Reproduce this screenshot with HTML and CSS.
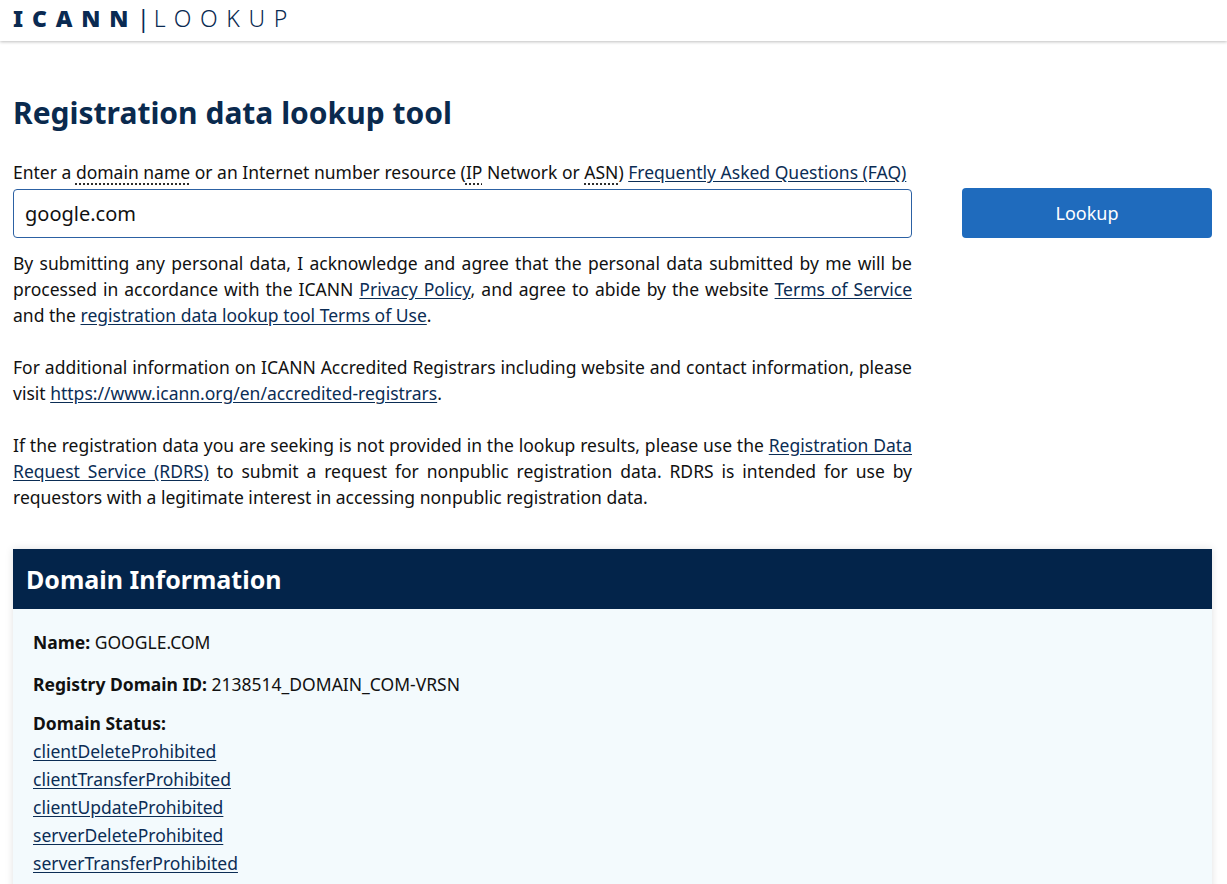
FILE: index.html
```html
<!DOCTYPE html>
<html lang="en">

<head>
    <meta charset="UTF-8">
    <meta name="viewport" content="width=device-width, initial-scale=1.0">
    <title>ICANN Lookup</title>
    <link rel="stylesheet" href="styles.css">
</head>

<body>
    <header class="site-header">
        <a class="logo" href="#"><span class="logo-icann">ICANN</span><span class="logo-bar">|</span><span class="logo-lookup">LOOKUP</span></a>
    </header>

    <main class="page">
        <h1>Registration data lookup tool</h1>

        <form class="lookup-form">
            <label class="lookup-label" for="query">Enter a <abbr title="Example: icann.org">domain name</abbr> or an Internet number resource (<abbr title="Internet Protocol">IP</abbr> Network or <abbr title="Autonomous System Number">ASN</abbr>) <a href="#">Frequently Asked Questions (FAQ)</a></label>
            <input class="lookup-input" type="text" id="query" name="query" value="google.com">
            <button class="lookup-button" type="button">Lookup</button>

            <div class="notes">
                <p>By submitting any personal data, I acknowledge and agree that the personal data submitted by me will be processed in accordance with the ICANN <a href="#">Privacy Policy</a>, and agree to abide by the website <a href="#">Terms of Service</a> and the <a href="#">registration data lookup tool Terms of Use</a>.</p>
                <p>For additional information on ICANN Accredited Registrars including website and contact information, please visit <a href="#">https://www.icann.org/en/accredited-registrars</a>.</p>
                <p>If the registration data you are seeking is not provided in the lookup results, please use the <a href="#">Registration Data Request Service (RDRS)</a> to submit a request for nonpublic registration data. RDRS is intended for use by requestors with a legitimate interest in accessing nonpublic registration data.</p>
            </div>
        </form>

        <section class="result-card">
            <h2 class="result-title">Domain Information</h2>
            <div class="result-body">
                <p><strong>Name:</strong> GOOGLE.COM</p>
                <p><strong>Registry Domain ID:</strong> 2138514_DOMAIN_COM-VRSN</p>
                <div class="status">
                    <strong>Domain Status:</strong>
                    <ul class="status-list">
                        <li><a href="#">clientDeleteProhibited</a></li>
                        <li><a href="#">clientTransferProhibited</a></li>
                        <li><a href="#">clientUpdateProhibited</a></li>
                        <li><a href="#">serverDeleteProhibited</a></li>
                        <li><a href="#">serverTransferProhibited</a></li>
                        <li><a href="#">serverUpdateProhibited</a></li>
                    </ul>
                </div>
            </div>
        </section>
    </main>
</body>

</html>
```

FILE: styles.css
```css
body {
    margin: 0;
    font-family: "Noto Sans", "Open Sans", sans-serif;
    font-size: 17.5px;
    line-height: 26px;
    color: #111111;
    background-color: #ffffff;
}

a {
    color: #0b2d55;
    text-decoration: underline;
    text-underline-offset: 2px;
}

abbr {
    text-decoration: underline dotted;
    text-underline-offset: 5px;
}

.site-header {
    height: 41px;
    padding: 0 13px;
    display: flex;
    align-items: center;
    box-shadow: 0 1px 3px rgba(0, 0, 0, 0.25);
}

.logo {
    display: flex;
    align-items: center;
    color: #0a2a52;
    text-decoration: none;
    font-size: 23px;
    line-height: 28px;
    margin-top: -5px;
}

.logo-icann {
    font-weight: 900;
    letter-spacing: 8.8px;
}

.logo-bar {
    font-weight: 400;
    margin: 0 4px 0 0;
}

.logo-lookup {
    font-weight: 300;
    letter-spacing: 8.6px;
}

.page {
    padding: 0 15px 0 13px;
}

h1 {
    margin: 52px 0 26px;
    font-size: 30px;
    line-height: 40px;
    font-weight: 700;
    color: #0a2a4e;
}

.lookup-form {
    display: grid;
    grid-template-columns: 1fr 250px;
    column-gap: 50px;
}

.lookup-label {
    grid-column: 1;
    margin-bottom: 4px;
}

.lookup-input {
    grid-column: 1;
    grid-row: 2;
    height: 49px;
    box-sizing: border-box;
    padding: 0 11px;
    font-family: inherit;
    font-size: 20px;
    color: #111111;
    border: 1px solid #2c61a3;
    border-radius: 4px;
}

.lookup-button {
    grid-column: 2;
    grid-row: 2;
    margin-top: -1px;
    height: 50px;
    background: #1f6bbd;
    color: #ffffff;
    font-family: inherit;
    font-size: 18px;
    border: none;
    border-radius: 4px;
    cursor: pointer;
}

.notes {
    grid-column: 1;
    margin-top: 12px;
    text-align: justify;
}

.notes p {
    margin: 0 0 26px;
}

.notes p:last-child {
    margin-bottom: 0;
}

.result-card {
    margin-top: 39px;
    background: #f3fafd;
    box-shadow: 0 0 8px rgba(0, 0, 0, 0.12);
}

.result-title {
    margin: 0;
    height: 60px;
    padding: 0 13px;
    display: flex;
    align-items: center;
    background: #03244a;
    color: #ffffff;
    font-size: 25px;
    font-weight: 700;
}

.result-body {
    padding: 19px 20px 20px;
    line-height: 28px;
}

.result-body p {
    margin: 0 0 14px;
}

.result-body p:last-of-type {
    margin-bottom: 11px;
}

.status strong {
    display: block;
}

.status-list {
    list-style: none;
    margin: 0;
    padding: 0;
}
```
